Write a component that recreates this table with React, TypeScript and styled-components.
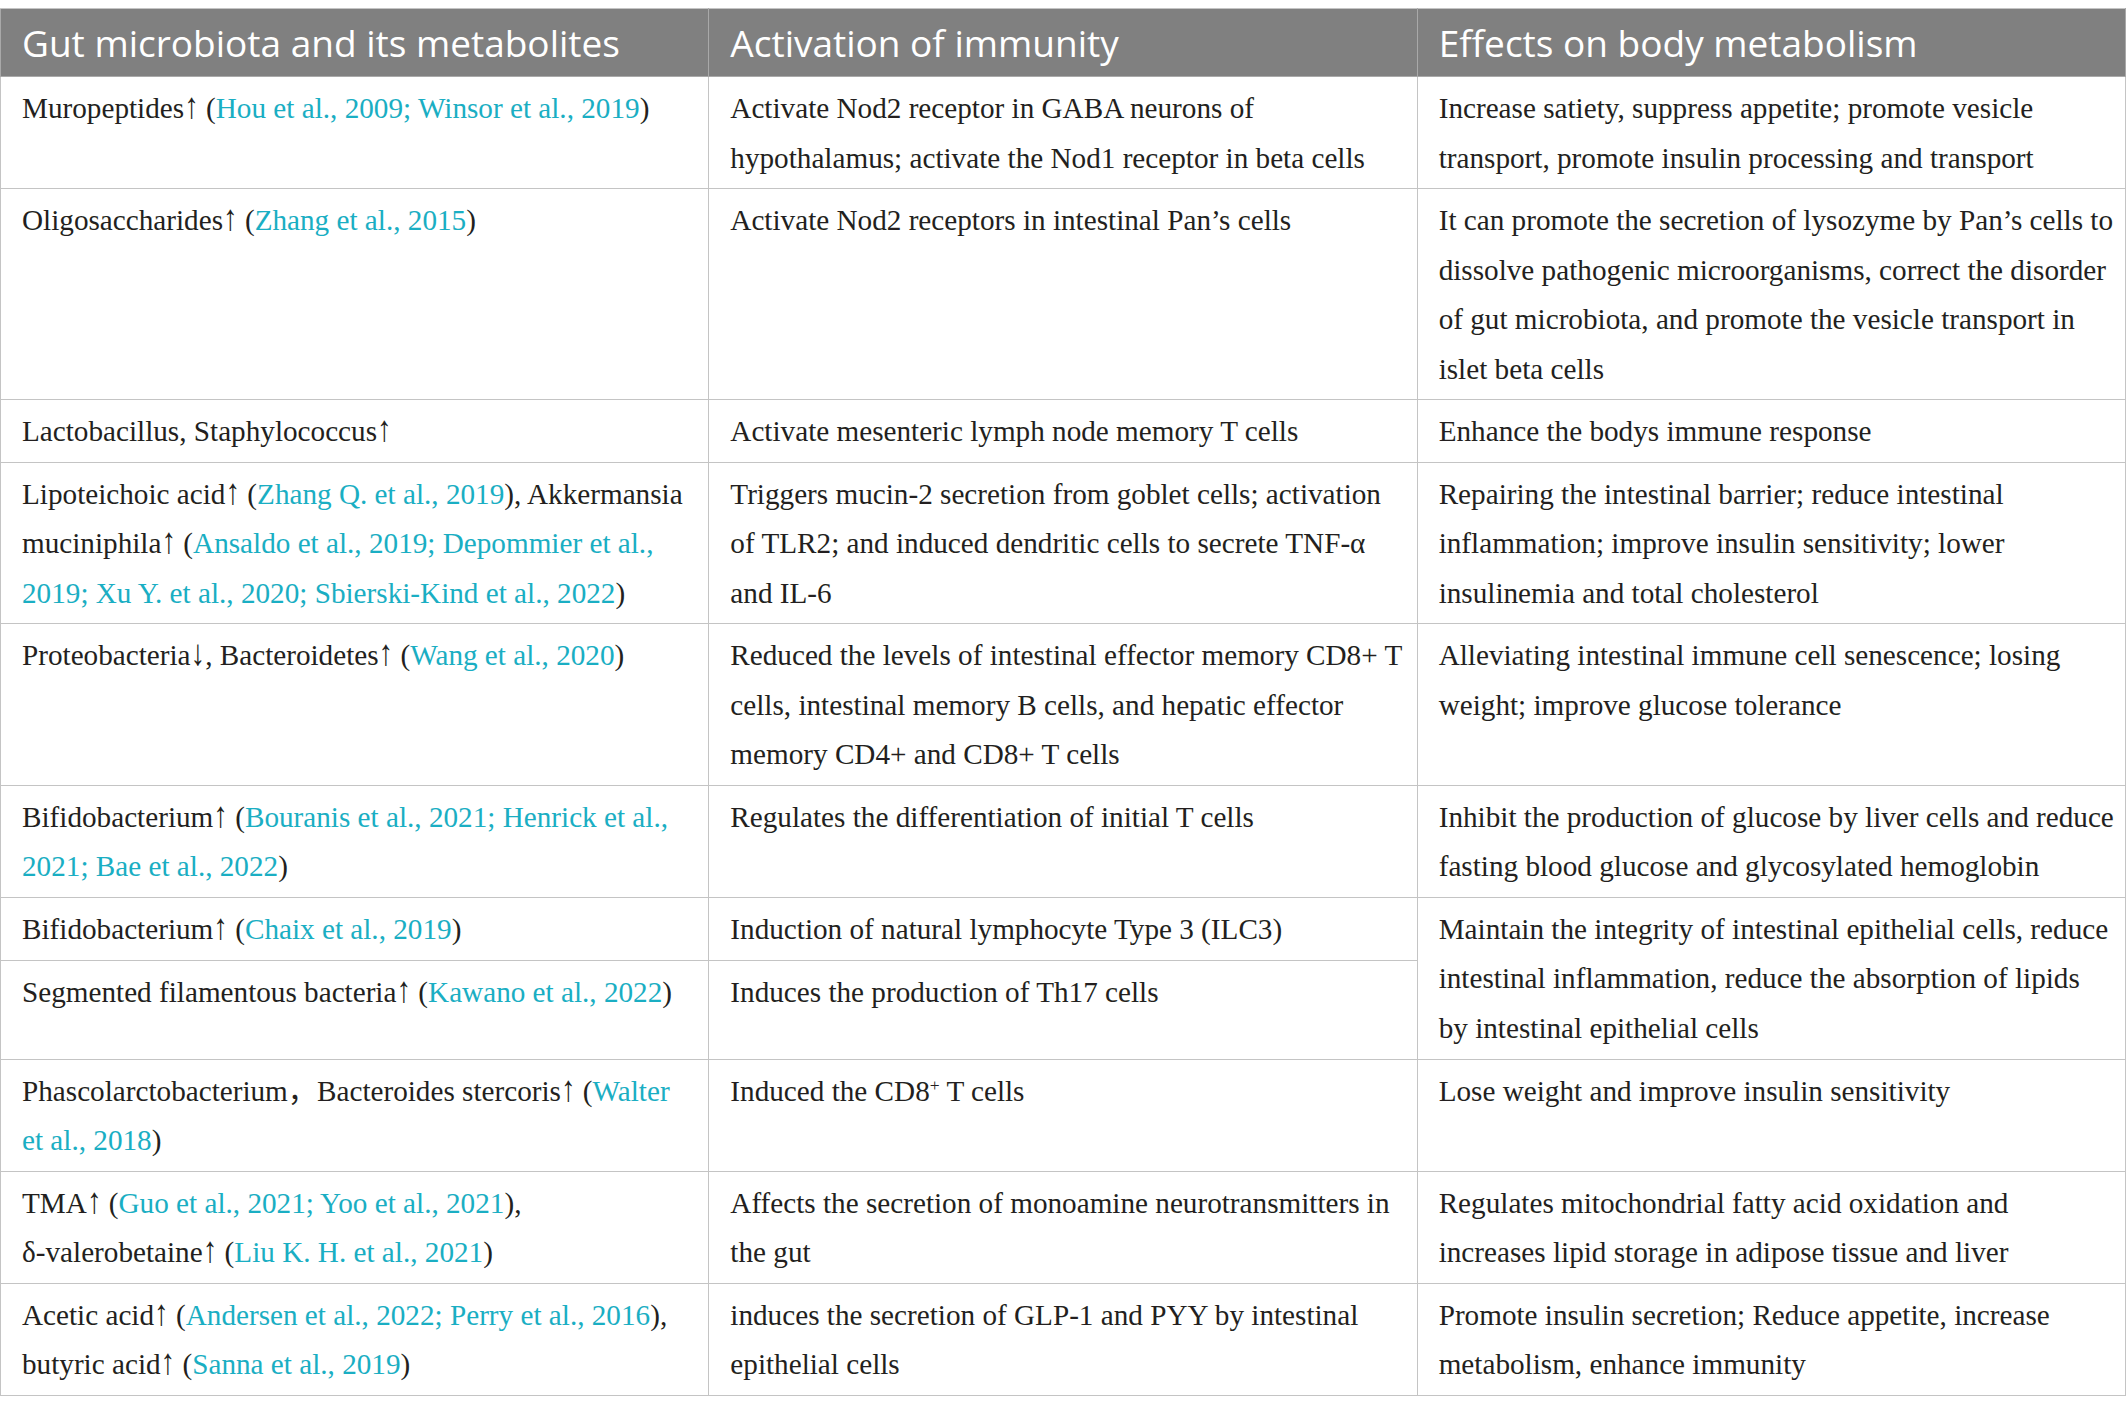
import React from 'react';
import styled, { createGlobalStyle } from 'styled-components';

const GlobalStyle = createGlobalStyle`
  html, body {
    margin: 0;
    padding: 0;
    background: #ffffff;
    overflow: hidden;
  }
  body {
    font-family: "Liberation Serif", "Noto Sans CJK SC", serif;
  }
`;

const Page = styled.div`
  padding-top: 8px;
`;

const Table = styled.table`
  width: 2126px;
  border-collapse: collapse;
  table-layout: fixed;
  border: 1px solid #c4c4c4;
`;

const HeadRow = styled.tr`
  background: #808080;
`;

const HeadCell = styled.th`
  height: 67px;
  padding: 0 12px 0 21px;
  font-family: "Open Sans", "Liberation Sans", sans-serif;
  font-weight: 400;
  font-size: 37px;
  line-height: 67px;
  color: #ffffff;
  text-align: left;
  white-space: nowrap;
  border: 1px solid #a9a9a9;
  border-top-color: #c4c4c4;
`;

const BodyRow = styled.tr<{ $height?: number }>`
  height: ${(p) => (p.$height ? `${p.$height}px` : 'auto')};
`;

const Cell = styled.td`
  vertical-align: top;
  padding: 7px 4px 5px 21px;
  font-family: "Liberation Serif", "Noto Sans CJK SC", serif;
  font-size: 29.2px;
  line-height: 49.5px;
  color: #231f20;
  border: 1px solid #c4c4c4;
`;

const Line = styled.div`
  white-space: nowrap;
`;

const Ref = styled.span`
  color: #1aaec3;
`;

const Arrow = styled.span`
  display: inline-block;
  line-height: 1;
  transform: scaleY(1.25);
  transform-origin: 50% 86%;
`;

const Sup = styled.sup`
  font-size: 0.6em;
  line-height: 0;
  vertical-align: 0.6em;
`;

function plain(text: string, key: string) {
  const parts = text.split(/([↑↓]|\^\+)/);
  return parts.map((p, i) => {
    if (p === '↑' || p === '↓') return <Arrow key={`${key}-${i}`}>{p}</Arrow>;
    if (p === '^+') return <Sup key={`${key}-${i}`}>+</Sup>;
    return <React.Fragment key={`${key}-${i}`}>{p}</React.Fragment>;
  });
}

function rich(text: string) {
  const parts = text.split(/(\[[^\]]+\])/);
  return parts.map((p, i) => {
    if (p.startsWith('[') && p.endsWith(']')) return <Ref key={i}>{p.slice(1, -1)}</Ref>;
    return <React.Fragment key={i}>{plain(p, String(i))}</React.Fragment>;
  });
}

type Row = {
  cells: string[][];
  rowSpan?: number[];
  height?: number;
};

const headers = [
  'Gut microbiota and its metabolites',
  'Activation of immunity',
  'Effects on body metabolism',
];

const rows: Row[] = [
  {
    cells: [
      ['Muropeptides↑ ([Hou et al., 2009; Winsor et al., 2019])'],
      ['Activate Nod2 receptor in GABA neurons of', 'hypothalamus; activate the Nod1 receptor in beta cells'],
      ['Increase satiety, suppress appetite; promote vesicle', 'transport, promote insulin processing and transport'],
    ],
  },
  {
    cells: [
      ['Oligosaccharides↑ ([Zhang et al., 2015])'],
      ['Activate Nod2 receptors in intestinal Pan’s cells'],
      [
        'It can promote the secretion of lysozyme by Pan’s cells to',
        'dissolve pathogenic microorganisms, correct the disorder',
        'of gut microbiota, and promote the vesicle transport in',
        'islet beta cells',
      ],
    ],
  },
  {
    cells: [
      ['Lactobacillus, Staphylococcus↑'],
      ['Activate mesenteric lymph node memory T cells'],
      ['Enhance the bodys immune response'],
    ],
  },
  {
    cells: [
      [
        'Lipoteichoic acid↑ ([Zhang Q. et al., 2019]), Akkermansia',
        'muciniphila↑ ([Ansaldo et al., 2019; Depommier et al.,]',
        '[2019; Xu Y. et al., 2020; Sbierski-Kind et al., 2022])',
      ],
      [
        'Triggers mucin-2 secretion from goblet cells; activation',
        'of TLR2; and induced dendritic cells to secrete TNF-α',
        'and IL-6',
      ],
      [
        'Repairing the intestinal barrier; reduce intestinal',
        'inflammation; improve insulin sensitivity; lower',
        'insulinemia and total cholesterol',
      ],
    ],
  },
  {
    cells: [
      ['Proteobacteria↓, Bacteroidetes↑ ([Wang et al., 2020])'],
      [
        'Reduced the levels of intestinal effector memory CD8+ T',
        'cells, intestinal memory B cells, and hepatic effector',
        'memory CD4+ and CD8+ T cells',
      ],
      ['Alleviating intestinal immune cell senescence; losing', 'weight; improve glucose tolerance'],
    ],
  },
  {
    cells: [
      ['Bifidobacterium↑ ([Bouranis et al., 2021; Henrick et al.,]', '[2021; Bae et al., 2022])'],
      ['Regulates the differentiation of initial T cells'],
      [
        'Inhibit the production of glucose by liver cells and reduce',
        'fasting blood glucose and glycosylated hemoglobin',
      ],
    ],
  },
  {
    cells: [
      ['Bifidobacterium↑ ([Chaix et al., 2019])'],
      ['Induction of natural lymphocyte Type 3 (ILC3)'],
      [
        'Maintain the integrity of intestinal epithelial cells, reduce',
        'intestinal inflammation, reduce the absorption of lipids',
        'by intestinal epithelial cells',
      ],
    ],
    rowSpan: [1, 1, 2],
    height: 63,
  },
  {
    cells: [
      ['Segmented filamentous bacteria↑ ([Kawano et al., 2022])'],
      ['Induces the production of Th17 cells'],
    ],
    height: 99,
  },
  {
    cells: [
      ['Phascolarctobacterium，Bacteroides stercoris↑ ([Walter]', '[et al., 2018])'],
      ['Induced the CD8^+ T cells'],
      ['Lose weight and improve insulin sensitivity'],
    ],
  },
  {
    cells: [
      ['TMA↑ ([Guo et al., 2021; Yoo et al., 2021]),', 'δ-valerobetaine↑ ([Liu K. H. et al., 2021])'],
      ['Affects the secretion of monoamine neurotransmitters in', 'the gut'],
      ['Regulates mitochondrial fatty acid oxidation and', 'increases lipid storage in adipose tissue and liver'],
    ],
  },
  {
    cells: [
      ['Acetic acid↑ ([Andersen et al., 2022; Perry et al., 2016]),', 'butyric acid↑ ([Sanna et al., 2019])'],
      ['induces the secretion of GLP-1 and PYY by intestinal', 'epithelial cells'],
      ['Promote insulin secretion; Reduce appetite, increase', 'metabolism, enhance immunity'],
    ],
  },
];

export default function App() {
  return (
    <Page>
      <GlobalStyle />
      <Table>
        <colgroup>
          <col style={{ width: '33.333%' }} />
          <col style={{ width: '33.333%' }} />
          <col style={{ width: '33.333%' }} />
        </colgroup>
        <thead>
          <HeadRow>
            {headers.map((h) => (
              <HeadCell key={h}>{h}</HeadCell>
            ))}
          </HeadRow>
        </thead>
        <tbody>
          {rows.map((r, ri) => (
            <BodyRow key={ri} $height={r.height}>
              {r.cells.map((lines, ci) => (
                <Cell key={ci} rowSpan={r.rowSpan ? r.rowSpan[ci] : 1}>
                  {lines.map((l, li) => (
                    <Line key={li}>{rich(l)}</Line>
                  ))}
                </Cell>
              ))}
            </BodyRow>
          ))}
        </tbody>
      </Table>
    </Page>
  );
}
